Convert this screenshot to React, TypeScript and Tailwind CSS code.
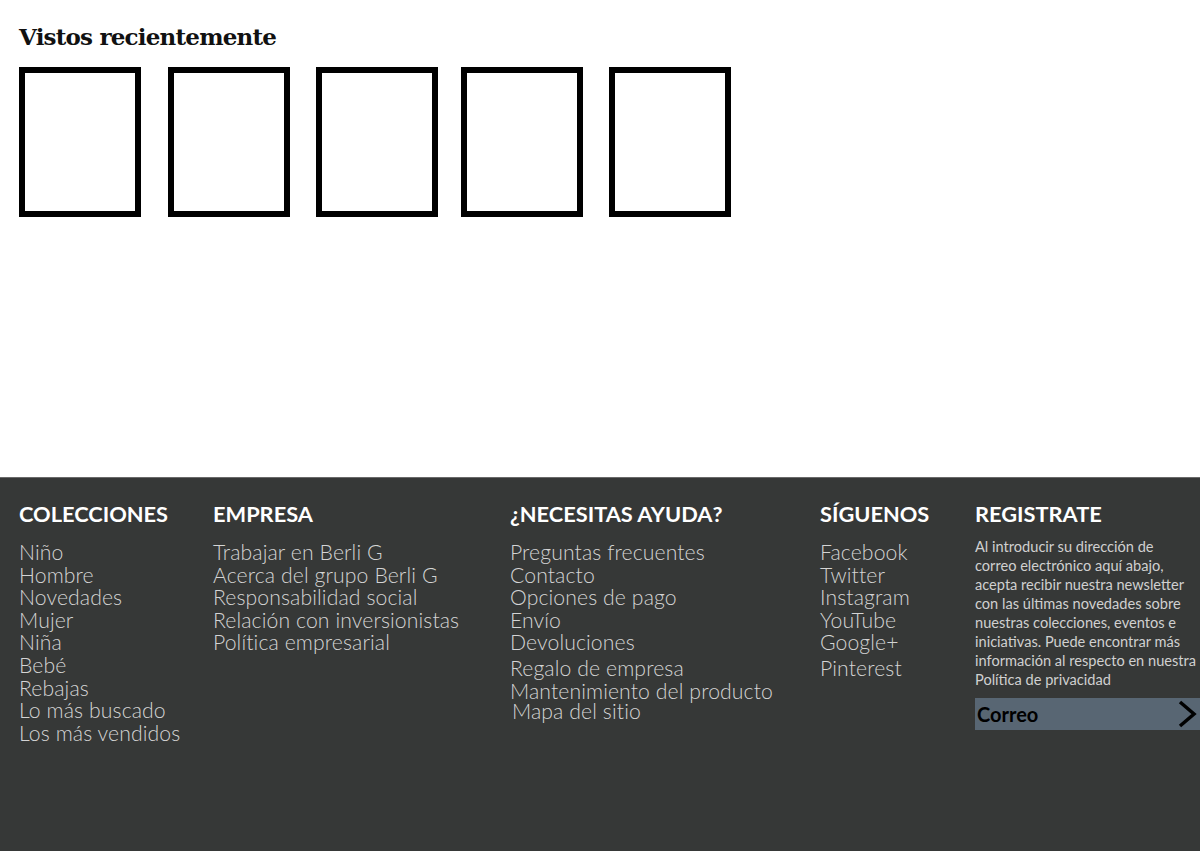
const colecciones = [
  "Niño",
  "Hombre",
  "Novedades",
  "Mujer",
  "Niña",
  "Bebé",
  "Rebajas",
  "Lo más buscado",
  "Los más vendidos",
];

const empresa = [
  "Trabajar en Berli G",
  "Acerca del grupo Berli G",
  "Responsabilidad social",
  "Relación con inversionistas",
  "Política empresarial",
];

const ayuda = [
  "Preguntas frecuentes",
  "Contacto",
  "Opciones de pago",
  "Envío",
  "Devoluciones",
];

const ayudaExtra = ["Regalo de empresa", "Mantenimiento del producto"];

const siguenos = ["Facebook", "Twitter", "Instagram", "YouTube", "Google+"];

// spacing between the viewed boxes isn't regular in the original
const boxMargins = ["", "ml-[27px]", "ml-[26px]", "ml-[23px]", "ml-[26px]"];

function FooterColumn({
  title,
  className,
  children,
}: {
  title: string;
  className?: string;
  children: React.ReactNode;
}) {
  return (
    <div className={className}>
      <h4 className="text-[21.8px] font-bold leading-[24px] text-white">
        {title}
      </h4>
      <div className="mt-[15px]">{children}</div>
    </div>
  );
}

function LinkList({ items }: { items: string[] }) {
  return (
    <ul>
      {items.map((item) => (
        <li
          key={item}
          className="text-[21.2px] font-light leading-[22.6px] tracking-[0.1px] text-[#d4d4d4]"
        >
          {item}
        </li>
      ))}
    </ul>
  );
}

export default function App() {
  return (
    <div className="flex min-h-[851px] flex-col bg-white">
      <section className="h-[477px] px-[19px] pt-[21px]">
        <h2 className="font-['DejaVu_Serif',serif] text-[23px] font-semibold leading-[32px] tracking-[-0.8px] text-[#111]">
          Vistos recientemente
        </h2>
        <div className="mt-[14px] flex">
          {boxMargins.map((m, i) => (
            <div
              key={i}
              className={`h-[150px] w-[122px] border-[6px] border-black bg-white ${m}`}
            />
          ))}
        </div>
      </section>

      <footer className="flex flex-1 border-t border-[#6a6a6a] bg-[#363837] pl-[19px] pt-[24px] font-['Lato',sans-serif]">
        <FooterColumn title="COLECCIONES" className="w-[194px]">
          <LinkList items={colecciones} />
        </FooterColumn>

        <FooterColumn title="EMPRESA" className="w-[297px]">
          <LinkList items={empresa} />
        </FooterColumn>

        <FooterColumn title="¿NECESITAS AYUDA?" className="w-[310px]">
          <LinkList items={ayuda} />
          <div className="mt-[3px]">
            <LinkList items={ayudaExtra} />
          </div>
          <p className="-mt-[2px] pl-[2px] text-[21.2px] font-light leading-[22.6px] tracking-[0.1px] text-[#d4d4d4]">
            Mapa del sitio
          </p>
        </FooterColumn>

        <FooterColumn title="SÍGUENOS" className="w-[155px]">
          <LinkList items={siguenos} />
          <p className="mt-[3px] text-[21.2px] font-light leading-[22.6px] tracking-[0.1px] text-[#d4d4d4]">
            Pinterest
          </p>
        </FooterColumn>

        <div className="flex-1">
          <h4 className="text-[21.8px] font-bold leading-[24px] text-white">
            REGISTRATE
          </h4>
          <p className="mt-[11px] pr-[3px] text-[14.6px] leading-[19px] text-[#d0d0d0]">
            Al introducir su dirección de correo electrónico aquí abajo, acepta
            recibir nuestra newsletter con las últimas novedades sobre nuestras
            colecciones, eventos e iniciativas. Puede encontrar más información
            al respecto en nuestra Política de privacidad
          </p>
          <div className="mt-[9px] flex h-[32px] items-center justify-between bg-[#586673] pl-[2px]">
            <span className="text-[20px] font-bold text-black">Correo</span>
            <svg
              width="24"
              height="30"
              viewBox="0 0 24 30"
              className="mr-[1px]"
            >
              <polyline
                points="5,3 19,15 5,27"
                fill="none"
                stroke="#000"
                strokeWidth="3.5"
              />
            </svg>
          </div>
        </div>
      </footer>
    </div>
  );
}
